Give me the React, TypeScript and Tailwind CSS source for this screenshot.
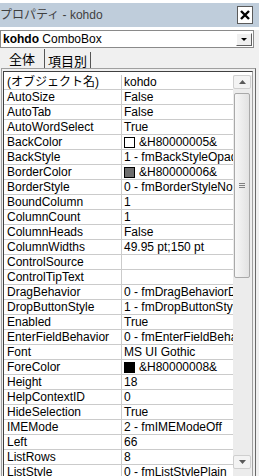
import React from 'react'

type Prop = {
  name: string
  value: string
  swatch?: string
}

const props: Prop[] = [
  { name: '(オブジェクト名)', value: 'kohdo' },
  { name: 'AutoSize', value: 'False' },
  { name: 'AutoTab', value: 'False' },
  { name: 'AutoWordSelect', value: 'True' },
  { name: 'BackColor', value: '&H80000005&', swatch: '#ffffff' },
  { name: 'BackStyle', value: '1 - fmBackStyleOpaque' },
  { name: 'BorderColor', value: '&H80000006&', swatch: '#6d6d6d' },
  { name: 'BorderStyle', value: '0 - fmBorderStyleNone' },
  { name: 'BoundColumn', value: '1' },
  { name: 'ColumnCount', value: '1' },
  { name: 'ColumnHeads', value: 'False' },
  { name: 'ColumnWidths', value: '49.95 pt;150 pt' },
  { name: 'ControlSource', value: '' },
  { name: 'ControlTipText', value: '' },
  { name: 'DragBehavior', value: '0 - fmDragBehaviorDisabled' },
  { name: 'DropButtonStyle', value: '1 - fmDropButtonStyleArrow' },
  { name: 'Enabled', value: 'True' },
  { name: 'EnterFieldBehavior', value: '0 - fmEnterFieldBehaviorSelectAll' },
  { name: 'Font', value: 'MS UI Gothic' },
  { name: 'ForeColor', value: '&H80000008&', swatch: '#000000' },
  { name: 'Height', value: '18' },
  { name: 'HelpContextID', value: '0' },
  { name: 'HideSelection', value: 'True' },
  { name: 'IMEMode', value: '2 - fmIMEModeOff' },
  { name: 'Left', value: '66' },
  { name: 'ListRows', value: '8' },
  { name: 'ListStyle', value: '0 - fmListStylePlain' },
  { name: 'Locked', value: 'False' },
]

const ScrollButton = ({ up }: { up?: boolean }) => (
  <div className="h-[14px] flex items-center justify-center bg-[#f3f3f3] border border-[#cfcfcf] rounded-[2px]">
    <svg width="7" height="4" viewBox="0 0 7 4">
      {up ? <path d="M0 4 L3.5 0 L7 4 Z" fill="#5a5a5a" /> : <path d="M0 0 L7 0 L3.5 4 Z" fill="#5a5a5a" />}
    </svg>
  </div>
)

export default function App() {
  return (
    <div className="w-[259px] h-[476px] overflow-hidden bg-[#f0f0f0] text-black font-['Liberation_Sans','Noto_Sans_CJK_JP',sans-serif] text-[12px] leading-none">
      {/* title bar */}
      <div className="h-[3px] bg-white" />
      <div className="h-[24px] bg-[#bfcddb] flex items-center justify-between">
        <span className="text-[12px] text-[#3f3f3f] whitespace-nowrap">プロパティ - kohdo</span>
        <div className="w-[16px] h-[18px] mr-[6px] bg-white border border-[#5a5a5a] flex items-center justify-center">
          <svg width="10" height="10" viewBox="0 0 10 10">
            <path d="M1 1 L9 9 M9 1 L1 9" stroke="#000" strokeWidth="2.4" />
          </svg>
        </div>
      </div>
      <div className="h-[3px] bg-white" />

      {/* object combo */}
      <div className="w-[254px] h-[18px] bg-white border border-[#8a8a8a] flex items-center justify-between">
        <span className="pl-[2px] whitespace-nowrap">
          <b>kohdo</b> ComboBox
        </span>
        <div className="w-[16px] h-[13px] mr-[1px] bg-[#f0f0f0] border-t border-l border-white border-b border-r border-b-[#5f5f5f] border-r-[#5f5f5f] flex items-center justify-center">
          <svg width="6" height="3" viewBox="0 0 6 3">
            <path d="M0 0 L6 0 L3 3 Z" fill="#000" />
          </svg>
        </div>
      </div>

      {/* tabs */}
      <div className="h-[20px] flex items-end text-[13px] font-['Noto_Sans_CJK_JP',sans-serif]">
        <div className="w-[45px] h-[19px] flex items-center justify-center border-r border-[#555] pb-[1px]">全体</div>
        <div className="w-[46px] h-[16px] flex items-center justify-center border-r border-[#555]">項目別</div>
      </div>

      {/* property grid panel */}
      <div className="ml-[1px] w-[255px] border-t border-l border-[#a0a0a0] border-r border-r-[#696969] pl-[1px] pr-[2px] pt-[2px] bg-[#f0f0f0]">
        <div className="w-[250px] border-t border-l border-[#404040] border-r border-r-[#a0a0a0] bg-white">
          <div className="h-[3px]" />
          <div className="flex">
            <div className="w-[229px]">
              {props.map((p) => (
                <div key={p.name} className="flex h-[15px] border-b border-[#cbcbcb]">
                  <div className="w-[118px] shrink-0 border-r border-[#cbcbcb] pl-[3px] flex items-center whitespace-nowrap overflow-hidden">
                    {p.name}
                  </div>
                  <div className="w-[111px] shrink-0 pl-[2px] flex items-center whitespace-nowrap overflow-hidden">
                    {p.swatch && (
                      <span
                        className="inline-block w-[11px] h-[11px] border border-black mr-[4px] shrink-0"
                        style={{ backgroundColor: p.swatch }}
                      />
                    )}
                    {p.value}
                  </div>
                </div>
              ))}
            </div>
            {/* scrollbar */}
            <div className="w-[18px] bg-[#ececec] flex flex-col">
              <ScrollButton up />
              <div className="h-[4px]" />
              <div className="h-[185px] mx-[1px] rounded-[2px] border border-[#a9a9a9] bg-gradient-to-r from-[#f7f7f7] to-[#e2e2e2] flex items-center justify-center">
                <div className="w-[6px] flex flex-col gap-[1px]">
                  <div className="h-[1px] bg-[#808080]" />
                  <div className="h-[1px] bg-[#808080]" />
                  <div className="h-[1px] bg-[#808080]" />
                </div>
              </div>
              <div className="h-[177px]" />
              <ScrollButton />
            </div>
            <div className="w-[1px] bg-[#f0f0f0]" />
          </div>
        </div>
      </div>
    </div>
  )
}
